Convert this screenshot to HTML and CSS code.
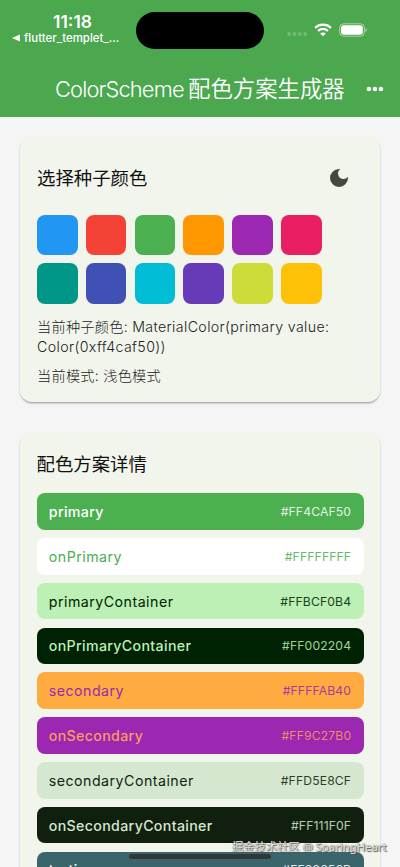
FILE: index.html
```html
<!DOCTYPE html>
<html lang="zh-CN">
<head>
<meta charset="utf-8">
<title>ColorScheme 配色方案生成器</title>
<link rel="stylesheet" href="styles.css">
</head>
<body>
<div class="screen">
  <header class="header">
    <div class="status">
      <div class="clock">
        <div class="time">11:18</div>
        <div class="back"><svg class="back-icon" viewBox="0 0 8 8"><path d="M8 0.4v7.2L0 4z"/></svg><span>flutter_templet_...</span></div>
      </div>
      <div class="island"></div>
      <div class="indicators">
        <svg class="dots" viewBox="0 0 20 4"><circle cx="2" cy="2" r="1.9"/><circle cx="7.4" cy="2" r="1.9"/><circle cx="12.8" cy="2" r="1.9"/><circle cx="18.1" cy="2" r="1.9"/></svg>
        <svg class="wifi" viewBox="0 0 17 13"><path class="arc" d="M1 4.5C5.2.5 11.8.5 16 4.5M3.8 7.4c2.7-2.5 6.7-2.5 9.4 0"/><path class="fan" d="M5.8 9.8c1.5-1.4 3.9-1.4 5.4 0L8.5 12.5z"/></svg>
        <svg class="battery" viewBox="0 0 28 14"><rect class="shell" x=".6" y=".8" width="24.8" height="12.4" rx="4"/><rect class="charge" x="2" y="2.2" width="21.8" height="9.6" rx="2.8"/><path class="cap" d="M26.4 5c1.7.6 1.7 3.4 0 4z"/></svg>
      </div>
    </div>
    <div class="bar">
      <h1 class="title"><span class="title-latin">ColorScheme</span><span class="title-cjk">配色方案生成器</span></h1>
      <svg class="more" viewBox="0 0 18 6"><circle cx="2.9" cy="3" r="2.3"/><circle cx="8.9" cy="3" r="2.3"/><circle cx="14.9" cy="3" r="2.3"/></svg>
    </div>
  </header>
  <main class="content">
    <section class="card picker">
      <div class="picker-head">
        <h2>选择种子颜色</h2>
        <svg class="moon" viewBox="3 3 18 18"><path d="M12 3a9 9 0 1 0 9 9c0-.46-.04-.92-.1-1.36a5.389 5.389 0 0 1-4.4 2.26 5.403 5.403 0 0 1-3.14-9.8c-.44-.06-.9-.1-1.36-.1z"/></svg>
      </div>
      <div class="swatches">
        <i class="blue"></i><i class="red"></i><i class="green"></i><i class="orange"></i><i class="purple"></i><i class="pink"></i>
        <i class="teal"></i><i class="indigo"></i><i class="cyan"></i><i class="violet"></i><i class="lime"></i><i class="amber"></i>
      </div>
      <p class="info">当前种子颜色: <span class="value">MaterialColor(primary value: Color(0xff4caf50))</span></p>
      <p class="info mode">当前模式: 浅色模式</p>
    </section>
    <section class="card details">
      <h2>配色方案详情</h2>
      <div class="roles">
        <div class="role primary"><b>primary</b><span>#FF4CAF50</span></div>
        <div class="role on-primary"><b>onPrimary</b><span>#FFFFFFFF</span></div>
        <div class="role primary-container"><b>primaryContainer</b><span>#FFBCF0B4</span></div>
        <div class="role on-primary-container"><b>onPrimaryContainer</b><span>#FF002204</span></div>
        <div class="role secondary"><b>secondary</b><span>#FFFFAB40</span></div>
        <div class="role on-secondary"><b>onSecondary</b><span>#FF9C27B0</span></div>
        <div class="role secondary-container"><b>secondaryContainer</b><span>#FFD5E8CF</span></div>
        <div class="role on-secondary-container"><b>onSecondaryContainer</b><span>#FF111F0F</span></div>
        <div class="role tertiary"><b>tertiary</b><span>#FF39656B</span></div>
      </div>
    </section>
  </main>
  <div class="home"></div>
  <div class="watermark">掘金技术社区 @ SoaringHeart</div>
</div>
</body>
</html>
```
FILE: styles.css
```css
* { box-sizing: border-box; }
body { margin: 0; background: #f5f5f5; font-family: Inter, "Noto Sans CJK SC", sans-serif; }
h1, h2, p { margin: 0; font-weight: 400; }
.screen { position: relative; width: 400px; height: 867px; overflow: hidden; }
.header { height: 117px; background: #4ba84f; color: #fff; }
.status { display: grid; grid-template-columns: 136px 128px 136px; height: 60px; }
.clock { padding: 12px 0 0 12px; }
.time { width: 121px; text-align: center; font-size: 17.5px; line-height: 20px; font-weight: 600; letter-spacing: 0; }
.back { display: flex; align-items: center; gap: 4px; font-size: 11.4px; line-height: 12px; font-weight: 500; letter-spacing: .05px; white-space: nowrap; }
.back-icon { width: 8px; height: 8px; fill: #fff; }
.island { height: 37px; margin-top: 12px; border-radius: 19px; background: #000; }
.indicators { display: flex; height: 14px; margin-top: 23px; padding-left: 23px; }
.dots { width: 20px; height: 4px; margin: 9px 7px 0 0; fill: #fff; opacity: .22; }
.wifi { width: 18px; height: 14px; margin-right: 6.5px; }
.arc { fill: none; stroke: #fff; stroke-width: 2.1; }
.fan { fill: #fff; }
.battery { width: 28px; height: 14px; }
.shell { fill: none; stroke: #fff; stroke-opacity: .5; stroke-width: 1; }
.charge { fill: #fff; }
.cap { fill: #fff; fill-opacity: .5; }
.bar { display: flex; align-items: center; height: 57px; padding: 0 16px 0 55px; }
.title { display: flex; align-items: baseline; flex: 1; margin-top: -2px; line-height: 30px; white-space: nowrap; }
.title-latin { width: 133px; font-size: 21.8px; font-weight: 300; letter-spacing: -.82px; }
.title-cjk { font-family: "Noto Sans CJK SC", sans-serif; font-size: 22.4px; font-weight: 350; }
.more { width: 18px; height: 6px; fill: #fff; }
.content { display: flex; flex-direction: column; gap: 31px; padding: 20px; }
.card { border-radius: 12px; background: #f1f5ec; box-shadow: 0 2px 2px -1px rgba(0,0,0,.3), 0 1px 3px rgba(0,0,0,.13); }
.picker { height: 265px; padding: 16px 16px 0 17px; }
.picker-head { display: flex; align-items: center; justify-content: space-between; height: 49px; padding-right: 16px; }
h2 { font-size: 18.4px; line-height: 26px; font-weight: 400; color: #111; }
.moon { width: 18px; height: 18px; fill: #424940; }
.swatches { display: grid; grid-template-columns: repeat(6, 40.6px); grid-auto-rows: 40.6px; gap: 8.2px; margin-top: 12.7px; }
.swatches i { border-radius: 8px; }
.blue { background: #2196f3; }
.red { background: #f44336; }
.green { background: #4caf50; }
.orange { background: #ff9800; }
.purple { background: #9c27b0; }
.pink { background: #e91e63; }
.teal { background: #009688; }
.indigo { background: #3f51b5; }
.cyan { background: #00bcd4; }
.violet { background: #673ab7; }
.lime { background: #cddc39; }
.amber { background: #ffc107; }
.info { margin-top: 12.6px; font-size: 14.2px; line-height: 20.5px; letter-spacing: .25px; font-weight: 300; color: #222; }
.value { letter-spacing: .37px; }
.mode { margin-top: 8px; }
.details { padding: 18px 16.5px 17px 16.5px; }
.roles { display: flex; flex-direction: column; gap: 8.2px; margin-top: 16.3px; }
.role { display: flex; align-items: center; justify-content: space-between; height: 36.6px; padding: 0 12.3px; border-radius: 8px; }
.role b { font-size: 14.2px; font-weight: 500; letter-spacing: .34px; }
.role span { font-size: 12.2px; font-weight: 400; letter-spacing: .13px; opacity: .85; }
.primary { background: #4caf50; color: #fff; }
.on-primary { background: #fff; color: #4caf50; }
.primary-container { background: #bcf0b4; color: #002204; }
.on-primary-container { background: #002204; color: #bcf0b4; }
.secondary { background: #ffab40; color: #9c27b0; }
.on-secondary { background: #9c27b0; color: #ff9a60; }
.secondary-container { background: #d5e8cf; color: #111f0f; }
.on-secondary-container { background: #111f0f; color: #d5e8cf; }
.on-primary b, .primary-container b, .secondary b, .secondary-container b { font-weight: 400; letter-spacing: .48px; }
.tertiary { background: #39656b; color: #fff; }
.home { position: absolute; left: 129px; top: 854px; width: 142px; height: 5px; border-radius: 3px; background: #343737; }
.watermark { position: absolute; left: 232px; top: 838px; font: 11.3px/17px "Noto Sans", "Noto Sans CJK SC", sans-serif; color: #e4e4e4; text-shadow: 0 0 1px #555, 1px 1px 1px #555; white-space: nowrap; }
```
